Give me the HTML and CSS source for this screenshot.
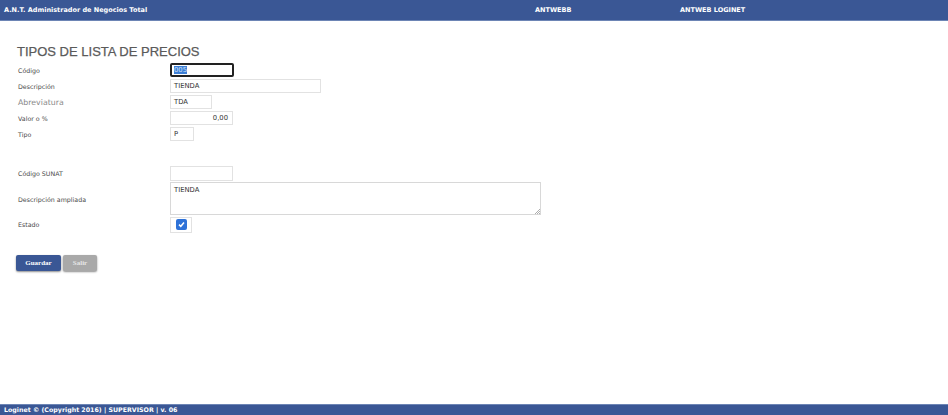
FILE: index.html
```html
<!DOCTYPE html>
<html lang="es">
<head>
<meta charset="utf-8">
<title>Tipos de lista de precios</title>
<link rel="stylesheet" href="styles.css">
</head>
<body>
<header class="topbar">
  <span class="brand">A.N.T. Administrador de Negocios Total</span>
  <span class="company">ANTWEBB</span>
  <span class="user">ANTWEB LOGINET</span>
</header>
<main class="content">
  <h1 class="title">TIPOS DE LISTA DE PRECIOS</h1>
  <form class="form">
    <div class="row"><label class="lbl">Código</label><div class="field"><span class="input focus w63"><span class="sel">005</span></span></div></div>
    <div class="row"><label class="lbl">Descripción</label><div class="field"><span class="input w150">TIENDA</span></div></div>
    <div class="row"><label class="lbl alt">Abreviatura</label><div class="field"><span class="input w41">TDA</span></div></div>
    <div class="row"><label class="lbl">Valor o %</label><div class="field"><span class="input w62 right">0,00</span></div></div>
    <div class="row"><label class="lbl">Tipo</label><div class="field"><span class="input w23">P</span></div></div>
    <div class="spacer"></div>
    <div class="row"><label class="lbl">Código SUNAT</label><div class="field"><span class="input w62 tall"></span></div></div>
    <div class="row rowta"><label class="lbl">Descripción ampliada</label><div class="field"><span class="textarea">TIENDA<svg class="grip" width="6" height="6" viewBox="0 0 6 6"><path d="M6 1L1 6M6 3L3 6M6 5L5 6" stroke="#999" stroke-width="0.8"/></svg></span></div></div>
    <div class="row rowchk"><label class="lbl">Estado</label><div class="field"><span class="chkbox"><span class="chk"><svg width="9" height="9" viewBox="0 0 9 9"><path d="M2 4.6L3.8 6.3L7 2.6" fill="none" stroke="#fff" stroke-width="1.5"/></svg></span></span></div></div>
    <div class="buttons">
      <span class="btn primary">Guardar</span>
      <span class="btn secondary">Salir</span>
    </div>
  </form>
</main>
<footer class="footer">Loginet © (Copyright 2016) | SUPERVISOR | v. 06</footer>
</body>
</html>
```
FILE: styles.css
```css
* { box-sizing: border-box; }
html, body { margin: 0; padding: 0; }
body {
  width: 948px;
  height: 415px;
  overflow: hidden;
  background: #fff;
  font-family: "DejaVu Sans", Verdana, sans-serif;
  color: #444;
  display: flex;
  flex-direction: column;
}
.topbar {
  height: 21px;
  background: #3a5795;
  border-bottom: 1px solid #6d85b5;
  color: #fff;
  font-weight: bold;
  font-size: 6.5px;
  display: flex;
  align-items: center;
  padding-left: 4px;
}
.brand { width: 531px; }
.company { width: 145px; }
.content {
  flex: 1;
  padding: 23px 0 0 17px;
}
.title {
  margin: 0 0 2px 0;
  font-family: "Liberation Sans", Arial, sans-serif;
  font-weight: normal;
  font-size: 13px;
  color: #5a5a5a;
  line-height: 16px;
  -webkit-text-stroke: 0.25px #5a5a5a;
}
.form { display: flex; flex-direction: column; }
.row {
  display: flex;
  align-items: center;
  height: 16px;
}
.lbl {
  width: 153px;
  padding-left: 1px;
  font-size: 6.3px;
  color: #4a4a4a;
}
.lbl.alt {
  font-size: 7.8px;
  color: #888;
}
.field { display: flex; align-items: center; }
.input {
  display: flex;
  align-items: center;
  height: 14px;
  border: 1px solid #e2e2e2;
  padding: 0 3px;
  font-size: 6.8px;
  color: #333;
  background: #fff;
}
.input.right { justify-content: flex-end; padding-right: 4px; }
.input.focus {
  border: 2px solid #222;
  border-radius: 2px;
  padding-left: 2px;
}
.sel { background: #3c7ed6; color: #cfe0f7; }
.w63 { width: 64px; }
.w150 { width: 151px; }
.w41 { width: 42px; }
.w62 { width: 63px; }
.w23 { width: 24px; }
.tall { height: 15px; }
.spacer { height: 23px; }
.rowta { height: 35px; align-items: center; }
.rowta .lbl { padding-top: 1px; }
.textarea {
  position: relative;
  display: block;
  width: 371px;
  height: 33px;
  border: 1px solid #d8d8d8;
  padding: 3px 3px;
  font-size: 6.8px;
  color: #333;
}
.grip { position: absolute; right: 0; bottom: 0; }
.rowchk { height: 17px; }
.chkbox {
  display: flex;
  align-items: center;
  justify-content: center;
  width: 22px;
  height: 16px;
  border: 1px solid #e2e2e2;
}
.chk {
  display: flex;
  align-items: center;
  justify-content: center;
  width: 11px;
  height: 11px;
  background: #2e72d8;
  border-radius: 2px;
}
.chk svg { display: block; }
.buttons {
  display: flex;
  gap: 2px;
  margin-top: 22px;
  margin-left: -1px;
}
.btn {
  display: flex;
  align-items: center;
  justify-content: center;
  height: 16px;
  font-family: "Liberation Serif", "Times New Roman", serif;
  font-weight: bold;
  font-size: 7px;
  color: #fff;
  border-radius: 2px;
  box-shadow: 0 1px 2px rgba(0,0,0,0.45);
}
.btn.primary { width: 45px; background: #3a5795; }
.btn.secondary { width: 34px; background: #a9a9a9; color: #e6e6e6; }
.footer {
  height: 11px;
  flex: none;
  background: #3a5795;
  border-top: 1px solid #6d85b5;
  color: #fff;
  font-weight: bold;
  font-size: 6.3px;
  line-height: 10px;
  padding-left: 4px;
  overflow: hidden;
  white-space: nowrap;
}
```
